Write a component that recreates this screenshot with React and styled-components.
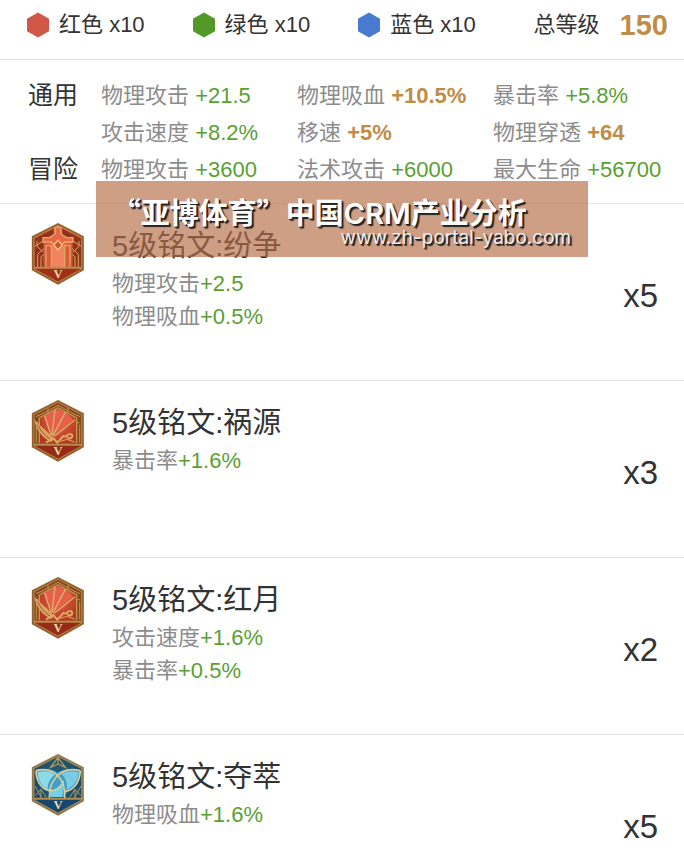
import React from 'react'
import styled, { createGlobalStyle } from 'styled-components'

const GlobalStyle = createGlobalStyle`
    body {
        margin: 0;
        background: #fff;
        color: #333;
        font-family: "Liberation Sans", "Noto Sans CJK SC", sans-serif;
        font-size: 22px;
    }
`

const Page = styled.main`
    position: relative;
`

const Summary = styled.header`
    display: flex;
    align-items: center;
    justify-content: space-between;
    height: 49px;
    padding: 0 16px 10px 26px;
    border-bottom: 1px solid #dedede;
    line-height: 26px;
    white-space: nowrap;
`

const ColorList = styled.ul`
    display: flex;
    gap: 47px;
    margin: 0;
    padding: 0;
    list-style: none;
`

const ColorItem = styled.li`
    display: flex;
    align-items: center;
    gap: 9px;
`

const Total = styled.div`
    display: flex;
    align-items: center;
    gap: 20px;
`

const TotalNumber = styled.strong`
    color: #c08d48;
    font-size: 29px;
`

const StatsSection = styled.section`
    padding: 17px 0 15px;
    border-bottom: 1px solid #e6e6e6;
`

const StatsTable = styled.table`
    width: 100%;
    table-layout: fixed;
    border-collapse: collapse;
    white-space: nowrap;
`

const StatsLabel = styled.th`
    width: 73px;
    height: 37px;
    padding: 0 0 0 28px;
    font-size: 25px;
    font-weight: normal;
    line-height: 37px;
    text-align: left;
`

const StatsCell = styled.td`
    width: ${props => props.$last ? '191px' : 'auto'};
    height: 37px;
    padding: 0;
    color: #8c8c8c;
    line-height: 37px;
`

const Value = styled.span`
    color: ${props => props.$gold ? '#c08d48' : '#59a032'};
    font-weight: ${props => props.$gold ? 'bold' : 'normal'};
`

const RuneList = styled.ul`
    margin: 0;
    padding: 0;
    list-style: none;
`

const RuneRow = styled.li`
    display: flex;
    align-items: flex-start;
    box-sizing: border-box;
    min-height: 177px;
    padding: 0 26px 0 31px;
    border-bottom: 1px solid #e2e2e2;
    &:last-child {
        min-height: 0;
        border-bottom: none;
    }
`

const RuneIcon = styled.svg`
    flex: none;
    width: 54px;
    height: 62px;
    margin-top: 19px;
`

const RuneInfo = styled.div`
    flex: 1;
    padding: 21px 0 0 27px;
`

const RuneTitle = styled.h2`
    margin: 0;
    font-size: 29px;
    font-weight: normal;
    line-height: 42px;
`

const RuneStat = styled.p`
    margin: 0;
    color: #8c8c8c;
    line-height: 33px;
`

const RuneCount = styled.div`
    padding-top: 72px;
    font-size: 33px;
    line-height: 40px;
`

const Banner = styled.aside`
    position: absolute;
    top: 181px;
    left: 14%;
    right: 14%;
    box-sizing: border-box;
    height: 76px;
    padding: 15px 17px 0 16px;
    background: rgba(181, 108, 70, 0.66);
    color: #fff;
    text-shadow: 1px 1px 0 #222, 2px 2px 1px #222;
    white-space: nowrap;
`

const BannerTitle = styled.div`
    font-family: "Noto Sans CJK SC", sans-serif;
    font-size: 29px;
    font-weight: bold;
    line-height: 30px;
`

const BannerLatin = styled.span`
    font-family: Inter, sans-serif;
    font-weight: 600;
`

const BannerUrl = styled.div`
    color: #eee;
    font-family: Inter, sans-serif;
    font-size: 19px;
    line-height: 18px;
    text-align: right;
`

function Hexagon({ color }) {
    return (
        <svg width="24" height="26" viewBox="0 0 24 26" aria-hidden="true">
            <path d="M12 0.5 23 6.8V19.2L12 25.5 1 19.2V6.8Z" fill={ color } />
        </svg>
    )
}

function Frame({ id, light, dark, base, edge = '#94602c', children }) {
    return (
        <RuneIcon viewBox="33 24 162 186" aria-hidden="true">
            <defs>
                <radialGradient id={ id } cx="0.5" cy="0.4" r="0.6">
                    <stop offset="0" stopColor={ light } />
                    <stop offset="1" stopColor={ dark } />
                </radialGradient>
            </defs>
            <path d="M114 28 188 66V164L114 205 39 164V66Z" fill={ `url(#${id})` } />
            <path d="M41 158H187V164L114 204 41 164Z" fill={ base } />
            { children }
            <path d="M42 158H186" stroke="#b88b4e" strokeWidth="6" />
            <path d="M114 28 188 66V164L114 205 39 164V66Z" fill="none" stroke={ edge } strokeWidth="7" />
            <path d="M114 31 185 68V162L114 201 42 162V68Z" fill="none" stroke="#c59a5a" strokeWidth="2" />
            <text x="114" y="190" textAnchor="middle" fontFamily="Liberation Serif, serif" fontSize="38" fontWeight="bold" fill="#ecd9aa">V</text>
        </RuneIcon>
    )
}

function PillarIcon() {
    return (
        <Frame id="pillar" light="#ee7650" dark="#b93f20" base="#a22f18">
            <path d="M44 72 101 41V64L70 82V156H44ZM184 72 127 41V64L158 82V156H184Z" fill="#8f3219" />
            <path d="M96 92H132V156H96Z" fill="#f08460" />
            <path d="M78 92H92V156H78ZM136 92H150V156H136Z" fill="#dc5a38" />
            <path d="M105 36H123V57L140 68H159V81H134L114 98 94 81H69V68H88L105 57Z" fill="#e96649" stroke="#e0ae6b" strokeWidth="4" />
            <path d="M114 76 127 90 114 104 101 90Z" fill="#cf5232" stroke="#efc77f" strokeWidth="4" />
            <g fill="none" stroke="#dca765" strokeWidth="4">
                <path d="M78 156V92H94V156M150 156V92H134V156" />
                <path d="M53 156V118L71 101M175 156V118L157 101M44 94 70 78M184 94 158 78M63 156V126L71 118M165 156V126L157 118" strokeWidth="3" />
                <path d="M51 78V94L68 110M177 78V94L160 110" strokeWidth="3" />
            </g>
        </Frame>
    )
}

function FanIcon({ id }) {
    return (
        <Frame id={ id } light="#e8614a" dark="#b23a24" base="#952b17">
            <path d="M114 31 185 68V158H42V68Z" fill="#87461f" />
            <path d="M114 50 168 80V156H60V80Z" fill={ `url(#${id})` } />
            <path d="M97 134 72 72 91 60 114 52 139 62 160 82Z" fill="#e7604b" />
            <g fill="none" stroke="#c9964f" strokeWidth="4">
                <path d="M58 154V78L114 47 170 78V154" />
                <path d="M48 74 66 66 114 40 162 66 180 74" strokeWidth="3" />
                <path d="M84 48V62M144 48V62M49 92H58M170 92H179M49 98V152M179 98V152" strokeWidth="3" />
            </g>
            <g fill="none" stroke="#dfb16c" strokeWidth="4">
                <path d="M93 130 74 72M96 130 105 52M99 131 136 61M103 133 164 84" />
            </g>
            <path d="M42 82C52 92 66 106 80 118L102 142 93 150C68 138 49 116 42 82Z" fill="#dba765" />
            <path d="M52 98C62 116 74 130 90 141" fill="none" stroke="#9d4c25" strokeWidth="3" />
            <path d="M78 152 100 138 112 152 130 132 140 134C144 124 156 124 157 133 156 139 149 141 143 137" fill="none" stroke="#dfaa63" strokeWidth="6" />
            <path d="M122 148 140 142 164 150" fill="none" stroke="#dfaa63" strokeWidth="3" />
        </Frame>
    )
}

function KnotIcon() {
    return (
        <Frame id="knot" light="#29607b" dark="#174660" base="#16476f" edge="#8d7a4c">
            <path d="M48 76C67 66 94 67 113 80 133 66 162 66 181 76 180 104 164 127 142 137L132 153H92L86 137C64 127 49 103 48 76Z" fill="#3f9fc4" />
            <path d="M53 79C70 73 89 75 104 86 88 99 81 116 83 131 64 120 54 102 53 79Z" fill="#8cdbea" />
            <path d="M124 85C139 75 159 73 176 80 173 105 160 122 140 131 143 111 137 95 124 85Z" fill="#79cce4" />
            <path d="M90 133C102 133 117 124 124 110 129 124 130 138 126 153H92Z" fill="#73d2e7" />
            <g fill="none" stroke="#d9cda0" strokeWidth="5">
                <path d="M48 74C92 62 138 89 134 156M181 74C132 62 87 90 88 156" />
                <path d="M48 74C49 119 77 139 104 132 120 127 130 114 130 104M181 74C179 112 158 134 136 136" />
            </g>
            <g fill="none" stroke="#b59a5e" strokeWidth="4">
                <path d="M114 34 92 64 114 54 136 64ZM114 34V54" />
                <path d="M45 120 63 153M45 149 63 130 79 154M183 120 165 153M183 149 165 130 149 154M63 130V156M165 130V156" strokeWidth="3" />
            </g>
        </Frame>
    )
}

const colors = [
    { name: '红色', color: '#d15849' },
    { name: '绿色', color: '#539927' },
    { name: '蓝色', color: '#477ad0' }
]

const stats = [
    { label: '通用', cells: [['物理攻击', '+21.5'], ['物理吸血', '+10.5%', true], ['暴击率', '+5.8%']] },
    { label: '', cells: [['攻击速度', '+8.2%'], ['移速', '+5%', true], ['物理穿透', '+64', true]] },
    { label: '冒险', cells: [['物理攻击', '+3600'], ['法术攻击', '+6000'], ['最大生命', '+56700']] }
]

const runes = [
    { name: '纷争', icon: <PillarIcon />, count: 5, stats: [['物理攻击', '+2.5'], ['物理吸血', '+0.5%']] },
    { name: '祸源', icon: <FanIcon id="fan-a" />, count: 3, stats: [['暴击率', '+1.6%']] },
    { name: '红月', icon: <FanIcon id="fan-b" />, count: 2, stats: [['攻击速度', '+1.6%'], ['暴击率', '+0.5%']] },
    { name: '夺萃', icon: <KnotIcon />, count: 5, stats: [['物理吸血', '+1.6%']] }
]

function App() {
    return (
        <Page>
            <GlobalStyle />
            <Summary>
                <ColorList>
                    { colors.map(item => (
                        <ColorItem key={ item.name }>
                            <Hexagon color={ item.color } />
                            <span>{ item.name } x10</span>
                        </ColorItem>
                    )) }
                </ColorList>
                <Total>
                    <span>总等级</span>
                    <TotalNumber>150</TotalNumber>
                </Total>
            </Summary>
            <StatsSection>
                <StatsTable>
                    <tbody>
                        { stats.map((row, i) => (
                            <tr key={ i }>
                                <StatsLabel scope="row">{ row.label }</StatsLabel>
                                { row.cells.map(([name, value, gold], j) => (
                                    <StatsCell key={ name } $last={ j === 2 }>
                                        { name } <Value $gold={ gold }>{ value }</Value>
                                    </StatsCell>
                                )) }
                            </tr>
                        )) }
                    </tbody>
                </StatsTable>
            </StatsSection>
            <RuneList>
                { runes.map(rune => (
                    <RuneRow key={ rune.name }>
                        { rune.icon }
                        <RuneInfo>
                            <RuneTitle>5级铭文:{ rune.name }</RuneTitle>
                            { rune.stats.map(([name, value]) => (
                                <RuneStat key={ name }>{ name }<Value>{ value }</Value></RuneStat>
                            )) }
                        </RuneInfo>
                        <RuneCount>x{ rune.count }</RuneCount>
                    </RuneRow>
                )) }
            </RuneList>
            <Banner>
                <BannerTitle>“亚博体育”中国<BannerLatin>CRM</BannerLatin>产业分析</BannerTitle>
                <BannerUrl>www.zh-portal-yabo.com</BannerUrl>
            </Banner>
        </Page>
    )
}

export default App
